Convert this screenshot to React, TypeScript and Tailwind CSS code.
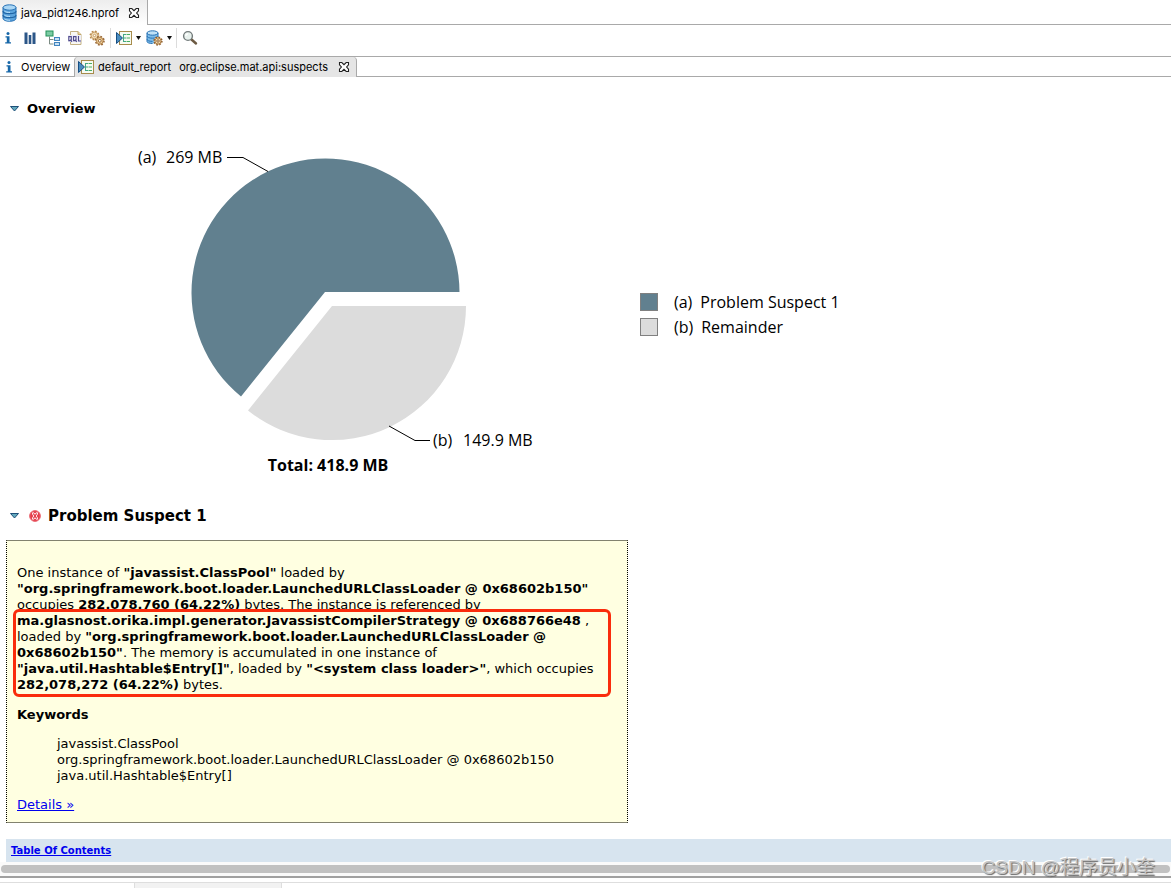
import type { ReactNode } from "react";

function DatabaseIcon({ className }: { className?: string }) {
  return (
    <svg viewBox="0 0 15 18" className={className} aria-hidden="true">
      <path d="M1 4v10.500c0 1.600 3 2.800 6.500 2.800s6.500-1.200 6.500-2.800V4z" fill="#5aa3dd" />
      <ellipse cx="7.500" cy="3.500" rx="6.500" ry="2.700" fill="#a9d6f5" stroke="#2872b5" />
      <path d="M1 3.500v11c0 1.500 3 2.800 6.500 2.800s6.500-1.300 6.500-2.800v-11" fill="none" stroke="#2872b5" />
      <path
        d="M1 7c0 1.500 3 2.600 6.500 2.600S14 8.500 14 7M1 11c0 1.500 3 2.600 6.500 2.600S14 12.500 14 11"
        fill="none"
        stroke="#2065a5"
        strokeWidth="1.200"
      />
      <path d="M2.500 7.200c1.500 1 3 1.200 5.500 1.200M2.500 11.200c1.500 1 3 1.200 5.500 1.200M2.500 15c1.500 1 3 1.200 5.500 1.200" fill="none" stroke="#c4e7fa" />
    </svg>
  );
}

function CloseIcon() {
  return (
    <svg viewBox="0 0 12 12" className="size-3" aria-hidden="true">
      <path
        d="M1.500 1.500h2.300L6 3.700l2.200-2.200h2.300v2.300L8.600 6l1.900 2.200v2.300H8.200L6 8.300l-2.200 2.200H1.500V8.200L3.400 6 1.500 3.800z"
        fill="#fff"
        stroke="#222"
        strokeWidth="1.100"
      />
    </svg>
  );
}

function InfoIcon() {
  return (
    <svg viewBox="0 0 8 14" className="h-3.5 w-2" aria-hidden="true">
      <circle cx="4" cy="2.500" r="1.500" fill="#1767a8" />
      <path d="M1.500 5.200h4v6H7v1.300H1.200v-1.300h1.600V6.500H1.500z" fill="#1767a8" />
    </svg>
  );
}

function HistogramIcon() {
  return (
    <svg viewBox="0 0 12 12" className="size-3" aria-hidden="true">
      <path d="M.5.500h3V12h-3zM4.700 3h2.600v9H4.700zM8.500.500h3V12h-3z" fill="#2c5688" />
    </svg>
  );
}

function TreeIcon() {
  return (
    <svg viewBox="0 0 16 16" className="size-4" aria-hidden="true">
      <rect x="1" y="1" width="7" height="5" fill="#7ccba4" stroke="#239159" />
      <path d="M4.500 6.500v7.500h4M4.500 9.500h4" fill="none" stroke="#7b8b83" />
      <rect x="9.500" y="7.500" width="5" height="3" fill="#c8e1f5" stroke="#4184bf" />
      <rect x="9.500" y="12.500" width="5" height="3" fill="#c8e1f5" stroke="#4184bf" />
    </svg>
  );
}

function OqlIcon() {
  return (
    <svg viewBox="0 0 16 16" className="size-4" aria-hidden="true">
      <path d="M3.500 1.500h7.500l3 3v10H3.500z" fill="#f8f7f4" stroke="#c3b184" />
      <path d="M11 1.500v3h3" fill="#ead7a0" stroke="#c3a764" />
      <rect x="1" y="5" width="13" height="7" fill="#eeeef6" />
      <path
        d="M1.800 6.600h2.500v4H1.800zM3.300 9.500L5 12M6.500 6.600H9v4H6.500zM8 9.500L9.700 12M11.500 6v5H14"
        fill="none"
        stroke="#4f4a8d"
        strokeWidth="1.100"
      />
    </svg>
  );
}

function GearsIcon() {
  return (
    <svg viewBox="0 0 16 16" className="size-4" aria-hidden="true">
      <circle cx="5.500" cy="5.500" r="4.200" fill="#f1dcb6" stroke="#b98a50" strokeWidth="1.600" strokeDasharray="1.700 1.600" />
      <circle cx="5.500" cy="5.500" r="3.300" fill="#f3dfba" stroke="#c0935a" strokeWidth=".8" />
      <circle cx="5.500" cy="5.500" r="1.200" fill="#fff" stroke="#b98a50" strokeWidth=".8" />
      <circle cx="10.800" cy="10.800" r="4.200" fill="#eed1a0" stroke="#986636" strokeWidth="1.600" strokeDasharray="1.700 1.600" />
      <circle cx="10.800" cy="10.800" r="3.300" fill="#efd19d" stroke="#a87843" strokeWidth=".8" />
      <circle cx="10.800" cy="10.800" r="1.400" fill="#fff" stroke="#8c5b2b" strokeWidth=".9" />
    </svg>
  );
}

function ReportIcon() {
  return (
    <svg viewBox="0 0 16 16" className="size-4" aria-hidden="true">
      <rect x="3.500" y="1.500" width="12" height="13" fill="#f6fbf2" stroke="#a78c4c" />
      <path d="M7.500 4v8M7.500 4.500H10M7.500 8H10M7.500 11.500H10" fill="none" stroke="#45a884" />
      <path d="M10.500 4.500h3.500M10.500 8h3.500M10.500 11.500h3.500" stroke="#48ae63" />
      <path d="M.500 2.500L6.500 8 .500 13.500z" fill="#4a8dbf" stroke="#174e83" />
    </svg>
  );
}

function DatabaseGearIcon() {
  return (
    <svg viewBox="0 0 17 16" className="h-4 w-[17px]" aria-hidden="true">
      <path d="M1 3v8.500c0 1.200 2.300 2 5.500 2s5.500-.8 5.500-2V3z" fill="#7dbce9" />
      <ellipse cx="6.500" cy="3" rx="5.500" ry="2.200" fill="#bfe1f7" stroke="#2872b5" />
      <path
        d="M1 6c0 1.300 2.300 2.200 5.500 2.200S12 7.300 12 6M1 9.200c0 1.300 2.300 2.200 5.500 2.200M1 3v8.500c0 1.200 2.300 2 5.500 2M12 3v5"
        fill="none"
        stroke="#2872b5"
      />
      <circle cx="12" cy="11" r="3.900" fill="#efd5a7" stroke="#8d5c2c" strokeWidth="1.500" strokeDasharray="1.600 1.460" />
      <circle cx="12" cy="11" r="3" fill="#f3dcb0" stroke="#a0703c" strokeWidth=".8" />
      <circle cx="12" cy="11" r="1.200" fill="#fff" stroke="#8d5c2c" />
    </svg>
  );
}

function SearchIcon() {
  return (
    <svg viewBox="0 0 16 16" className="size-4" aria-hidden="true">
      <path d="M9.500 9.500l4.500 4" stroke="#6c5a43" strokeWidth="2.400" strokeLinecap="round" />
      <circle cx="6" cy="6" r="4.400" fill="#e9f2ee" stroke="#737b7b" strokeWidth="1.400" />
      <path d="M3.800 6a2.300 2.300 0 0 1 2.200-2.200" fill="none" stroke="#fff" strokeWidth="1.200" />
    </svg>
  );
}

function DropArrow() {
  return (
    <svg viewBox="0 0 5 4" className="h-1 w-[5px]" aria-hidden="true">
      <path d="M0 0h5L2.500 4z" fill="#111" />
    </svg>
  );
}

function TwistieIcon() {
  return (
    <svg viewBox="0 0 9 6" className="h-1.5 w-[9px]" aria-hidden="true">
      <path d="M.500.500h8L4.500 5z" fill="#62a9bd" stroke="#1d4f78" />
    </svg>
  );
}

function ErrorIcon() {
  return (
    <svg viewBox="0 0 12 12" className="size-3" aria-hidden="true">
      <circle cx="6" cy="6" r="5.400" fill="#e5404d" stroke="#ea6a74" />
      <path
        d="M3.500 2.800h1.300L6 4.300l1.200-1.500h1.300v1.400L7.200 6l1.300 1.800v1.400H7.200L6 7.700 4.800 9.200H3.500V7.800L4.800 6 3.500 4.200z"
        fill="#e5404d"
        stroke="#fff"
        strokeWidth=".9"
      />
    </svg>
  );
}

function ToolButton({ label, children }: { label: string; children: ReactNode }) {
  return (
    <button type="button" aria-label={label} className="flex h-5 items-center gap-1">
      {children}
    </button>
  );
}

function PieChart() {
  return (
    <svg
      viewBox="0 0 600 360"
      className="h-[360px] w-[600px] shrink-0"
      fontFamily="'Open Sans', 'Noto Sans', sans-serif"
      fontSize="16"
    >
      <path d="M319 162H453.500A134 134 0 1 0 235 266.500z" fill="#61808f" />
      <path d="M326 176H460A134 134 0 0 1 242 280.500z" fill="#dcdcdc" />
      <path d="M221 27.500h16L262 41.500M383 296l26 14.500h15" fill="none" stroke="#000" />
      <text x="132" y="33">(a)</text>
      <text x="160" y="33">269 MB</text>
      <text x="427" y="316">(b)</text>
      <text x="457" y="316">149.9 MB</text>
      <text x="322" y="341" textAnchor="middle" fontWeight="bold">
        Total: 418.9 MB
      </text>
    </svg>
  );
}

const legend = [
  { key: "(a)", label: "Problem Suspect 1", swatch: "bg-[#61808f]" },
  { key: "(b)", label: "Remainder", swatch: "bg-[#dcdcdc]" },
];

const keywords = [
  "javassist.ClassPool",
  "org.springframework.boot.loader.LaunchedURLClassLoader @ 0x68602b150",
  "java.util.Hashtable$Entry[]",
];

export default function App() {
  return (
    <div className="min-h-screen overflow-x-hidden bg-white font-['Inter','Liberation_Sans',sans-serif] text-[11px] text-black">
      {/* Editor tabs */}
      <div className="flex h-[25px] border-b border-[#a9a9a9]">
        <div className="-mb-px flex items-center gap-1 border-r border-[#a9a9a9] bg-linear-to-b from-[#ededed] to-white pt-px pr-[7px] pl-0.5">
          <DatabaseIcon className="h-[18px] w-[15px]" />
          <span>java_pid1246.hprof</span>
          <button type="button" aria-label="Close editor" className="ml-[5px]">
            <CloseIcon />
          </button>
        </div>
      </div>

      {/* Toolbar */}
      <div className="flex h-8 items-center border-b border-[#a9a9a9] pb-1.5 pl-1">
        <div className="flex items-center gap-3 pr-[5px]">
          <ToolButton label="Overview"><InfoIcon /></ToolButton>
          <ToolButton label="Histogram"><HistogramIcon /></ToolButton>
          <div className="-ml-[3px] flex gap-1.5">
            <ToolButton label="Dominator tree"><TreeIcon /></ToolButton>
            <ToolButton label="Object query"><OqlIcon /></ToolButton>
            <ToolButton label="Thread overview"><GearsIcon /></ToolButton>
          </div>
        </div>
        <div className="flex items-center gap-[5px] border-x border-[#dcdcdc] pr-1 pl-[5px]">
          <ToolButton label="Run report"><ReportIcon /><DropArrow /></ToolButton>
          <ToolButton label="Query browser"><DatabaseGearIcon /><DropArrow /></ToolButton>
        </div>
        <div className="pl-[5px]">
          <ToolButton label="Find"><SearchIcon /></ToolButton>
        </div>
      </div>

      {/* Pane tabs */}
      <div className="flex h-5 border-b border-[#a9a9a9]">
        <button type="button" className="flex w-[74px] items-center gap-2 pt-px pl-[5px]">
          <InfoIcon />
          Overview
        </button>
        <div className="-mb-px flex items-center gap-1 rounded-t border-x border-[#a9a9a9] bg-[#e5e5e5] pr-1.5 pl-[3px]">
          <ReportIcon />
          <span className="flex gap-2">
            <span>default_report</span>
            <span>org.eclipse.mat.api:suspects</span>
          </span>
          <button type="button" aria-label="Close report" className="ml-1.5">
            <CloseIcon />
          </button>
        </div>
      </div>

      {/* Report */}
      <main className="pl-1.5 font-['Verdana','DejaVu_Sans',sans-serif] text-[13px] leading-4">
        <h2 className="flex items-center gap-2 pt-6 pl-1 text-[13px] font-bold">
          <TwistieIcon />
          Overview
        </h2>

        <div className="mt-[13px] flex items-start">
          <PieChart />
          <ul className="mt-[162px] ml-[34px] space-y-[5px] font-['Open_Sans','Noto_Sans',sans-serif] text-[16px] leading-5">
            {legend.map((item) => (
              <li key={item.key} className="flex items-center whitespace-nowrap">
                <span className={`mr-4 size-[18px] border border-[#808080] ${item.swatch}`} />
                <span className="mr-2">{item.key}</span>
                <span>{item.label}</span>
              </li>
            ))}
          </ul>
        </div>

        <h2 className="mt-4 flex items-center pl-1 text-[15px] leading-5 font-bold">
          <TwistieIcon />
          <span className="mr-[7px] ml-2.5"><ErrorIcon /></span>
          Problem Suspect 1
        </h2>

        <section className="mt-3.5 w-[622px] max-w-full border-x border-y border-x-black border-y-[#82826f] bg-[#ffffe1] px-2.5 pt-6 pb-[9px] [border-style:solid_dotted]">
          <div className="relative">
            <p className="whitespace-nowrap">
              One instance of <b>"javassist.ClassPool"</b> loaded by
              <br />
              <b>"org.springframework.boot.loader.LaunchedURLClassLoader @ 0x68602b150"</b>
              <br />
              occupies <b>282,078,760 (64.22%)</b> bytes. The instance is referenced by
              <br />
              <b>ma.glasnost.orika.impl.generator.JavassistCompilerStrategy @ 0x688766e48</b> ,
              <br />
              loaded by <b>"org.springframework.boot.loader.LaunchedURLClassLoader @</b>
              <br />
              <b>0x68602b150"</b>. The memory is accumulated in one instance of
              <br />
              <b>"java.util.Hashtable$Entry[]"</b>, loaded by <b>"&lt;system class loader&gt;"</b>, which occupies
              <br />
              <b>282,078,272 (64.22%)</b> bytes.
            </p>
            <div className="pointer-events-none absolute right-1.5 -bottom-1 -left-1 h-[88px] rounded-md border-3 border-[#fa2c0c]" />
          </div>
          <h3 className="mt-3.5 font-bold">Keywords</h3>
          <ul className="mt-[13px] pl-10 whitespace-nowrap">
            {keywords.map((keyword) => (
              <li key={keyword}>{keyword}</li>
            ))}
          </ul>
          <a href="#details" className="mt-[13px] inline-block text-[#0000ee] underline">
            Details »
          </a>
        </section>

        <div className="mt-4 h-[23px] bg-[#d7e4ef] pl-[5px] text-[10px] leading-[23px] font-bold">
          <a href="#contents" className="text-[#0000ee] underline">
            Table Of Contents
          </a>
        </div>
      </main>

      {/* Horizontal scrollbar */}
      <div className="relative h-4 border-b-2 border-[#a0a0a0] bg-[#fafafa] px-px pt-[3px]">
        <div className="h-2 rounded-full bg-[#c1c1c1]" />
        <span className="absolute -top-1.5 right-4 font-['Liberation_Sans','Noto_Sans_CJK_SC',sans-serif] text-[19px] leading-6 whitespace-nowrap text-[#c4c4c4] [text-shadow:1px_1px_1px_#666,-1px_-1px_0_#ffffff]">
          CSDN @程序员小奎
        </span>
      </div>
      <div className="mt-1 h-1.5 border-t border-[#dedede]">
        <div className="ml-[134px] h-full w-[148px] border-x border-[#dedede] bg-[#f2f2f2]" />
      </div>
    </div>
  );
}
